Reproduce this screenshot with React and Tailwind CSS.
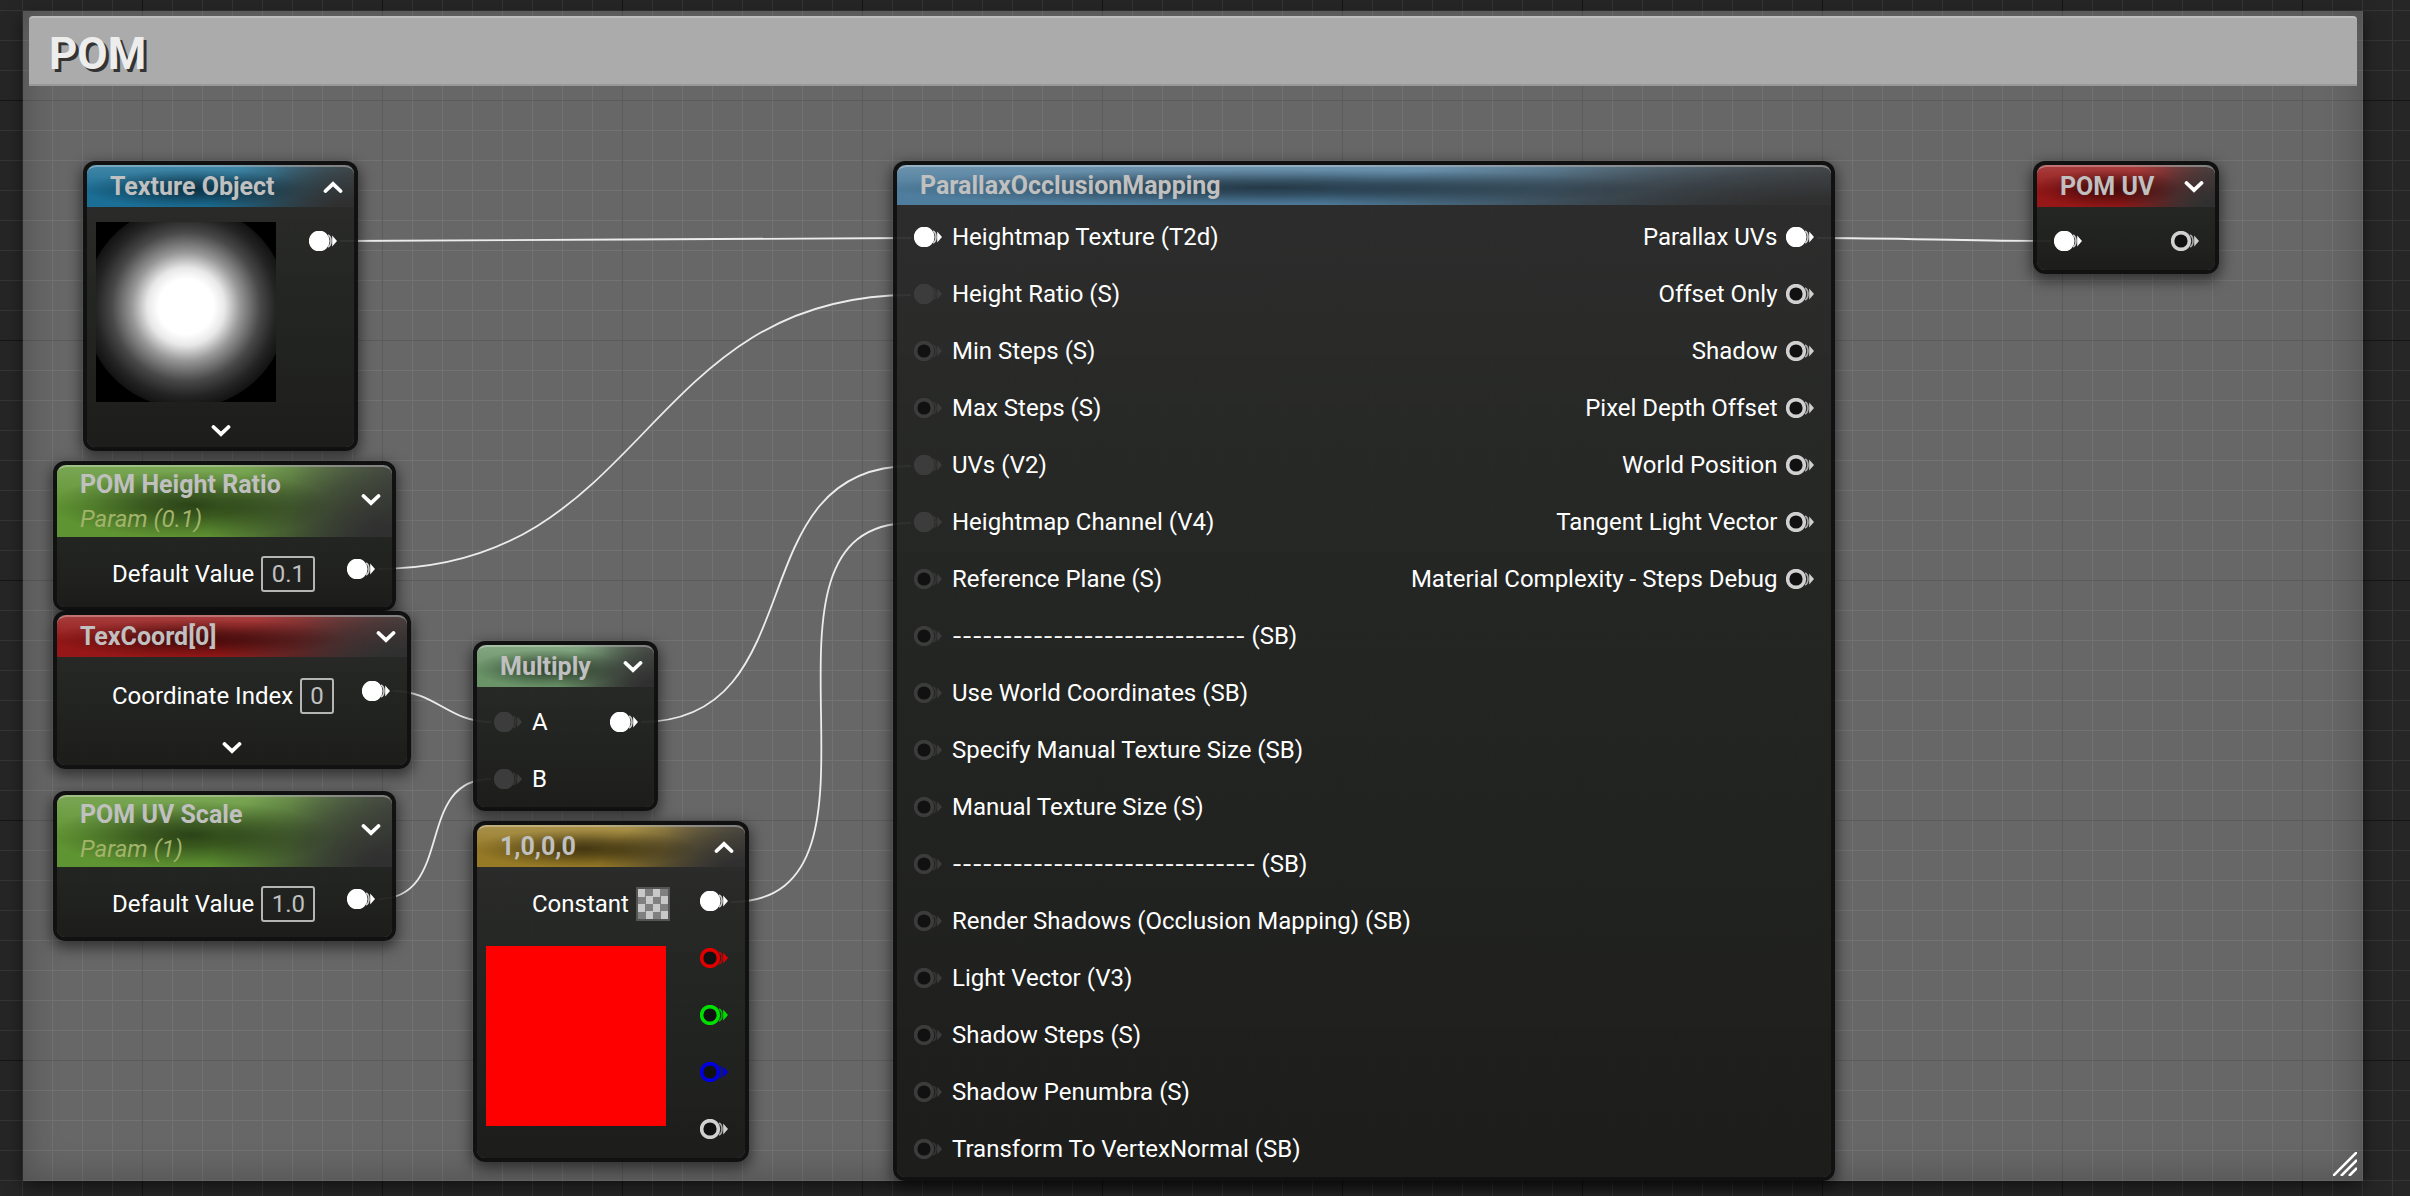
import { useState } from 'react'
import clsx from 'clsx'

const INPUTS = [
  { name: 'Heightmap Texture (T2d)', pin: 'white', filled: true },
  { name: 'Height Ratio (S)', filled: true },
  { name: 'Min Steps (S)' },
  { name: 'Max Steps (S)' },
  { name: 'UVs (V2)', filled: true },
  { name: 'Heightmap Channel (V4)', filled: true },
  { name: 'Reference Plane (S)' },
  { rule: '-----------------------------', name: '(SB)' },
  { name: 'Use World Coordinates (SB)' },
  { name: 'Specify Manual Texture Size (SB)' },
  { name: 'Manual Texture Size (S)' },
  { rule: '------------------------------', name: '(SB)' },
  { name: 'Render Shadows (Occlusion Mapping) (SB)' },
  { name: 'Light Vector (V3)' },
  { name: 'Shadow Steps (S)' },
  { name: 'Shadow Penumbra (S)' },
  { name: 'Transform To VertexNormal (SB)' },
]

const OUTPUTS = [
  'Parallax UVs',
  'Offset Only',
  'Shadow',
  'Pixel Depth Offset',
  'World Position',
  'Tangent Light Vector',
  'Material Complexity - Steps Debug',
]

// [x1, y1, x2, y2]
const WIRES = [
  [340, 241, 911, 238],
  [378, 569, 911, 295],
  [393, 691, 491, 722],
  [378, 899, 491, 779],
  [641, 722, 911, 466],
  [731, 902, 911, 523],
  [1817, 238, 2051, 241],
]

const PIN_COLORS = {
  white: '#ffffff',
  silver: '#d0d0d0',
  dark: '#3c3c3c',
  red: '#e00000',
  green: '#00e000',
  blue: '#0000e0',
}

function wirePath([x1, y1, x2, y2]) {
  const t = (Math.abs(x2 - x1) + Math.abs(y2 - y1)) / 3
  return `M${x1} ${y1} C${x1 + t} ${y1} ${x2 - t} ${y2} ${x2} ${y2}`
}

function Pin({ color = 'dark', filled = false }) {
  const c = PIN_COLORS[color]
  return (
    <svg width="28" height="20" viewBox="0 0 28 20" className="block shrink-0" aria-hidden="true">
      {filled ? (
        <circle cx="10.2" cy="10" r="10.4" fill={c} />
      ) : (
        <circle cx="10" cy="10" r="8.4" fill="#111111" stroke={c} strokeWidth="3.6" />
      )}
      <path d="M19 4 Q22 5.5 22 10 Q22 14.5 19 16" fill="none" stroke={c} strokeWidth="1.6" opacity="0.75" />
      <path d="M23.2 4.4 L28 10 L23.2 15.6 Z" fill={c} />
    </svg>
  )
}

function Chevron({ up = false, label }) {
  return (
    <button type="button" aria-label={label} className="flex h-5 w-6 shrink-0 items-center justify-center">
      <svg width="20" height="12" viewBox="0 0 20 12" aria-hidden="true">
        <path
          d={up ? 'M2.5 10 L10 2.8 L17.5 10' : 'M2.5 2 L10 9.2 L17.5 2'}
          fill="none"
          stroke="#ffffff"
          strokeWidth="3.8"
          strokeLinecap="round"
        />
      </svg>
    </button>
  )
}

function Node({ title, subtitle, color, place, chevron, children }) {
  return (
    <section
      className={clsx(
        'absolute rounded-[12px] border-4 border-[#0d0d0d]/95 bg-linear-to-b from-[#272827]/92 via-[#1f211e]/94 to-[#191a18]/95 bg-clip-padding whitespace-nowrap shadow-[0_5px_14px_2px_rgba(0,0,0,0.5)]',
        place
      )}
    >
      <header
        className={clsx(
          'flex justify-between rounded-t-[9px] border-t-2 border-t-white/40 pr-[9px] pl-[23px]',
          'bg-[radial-gradient(ellipse_42%_48%_at_40%_54%,rgba(0,0,0,0.55),rgba(0,0,0,0.4)_35%,rgba(0,0,0,0.13)_75%,transparent),radial-gradient(ellipse_55%_170%_at_100%_110%,#303030_15%,rgba(48,48,48,0.6)_55%,transparent),linear-gradient(to_right,transparent_70%,rgba(80,80,80,0.8)),linear-gradient(to_bottom,rgba(255,255,255,0.16),transparent_60%)]',
          subtitle && 'h-[72px] items-start',
          !subtitle && 'items-center pb-px',
          !subtitle && (chevron ? 'h-[42px]' : 'h-10'),
          color
        )}
      >
        <div>
          <h2 className="text-[25px] leading-9 font-bold text-[#c0c0c0]">{title}</h2>
          {subtitle && <p className="text-[24px] leading-8 text-[#a2b36a] italic">{subtitle}</p>}
        </div>
        {chevron && (
          <div className={clsx(subtitle && 'pt-[23px]')}>
            <Chevron up={chevron === 'up'} label={`Toggle ${title}`} />
          </div>
        )}
      </header>
      {children}
    </section>
  )
}

function ValueField({ id, label, initial, width }) {
  const [value, setValue] = useState(initial)
  return (
    <div className="flex items-center gap-[7px]">
      <label htmlFor={id}>{label}</label>
      <input
        id={id}
        value={value}
        onChange={e => setValue(e.target.value)}
        className={clsx('h-9 rounded-[3px] border-2 border-[#b5b5b5] bg-transparent text-center text-[#c0c0c0] outline-none', width)}
      />
    </div>
  )
}

function ParamNode({ id, title, subtitle, value, place }) {
  return (
    <Node title={title} subtitle={subtitle} color="bg-[#5f9432]" place={place} chevron="down">
      <div className="flex h-[70px] items-start justify-between pt-[19px] pr-[17px] pl-[55px]">
        <ValueField id={id} label="Default Value" initial={value} width="w-[54px]" />
        <div className="pt-[3px]">
          <Pin color="white" filled />
        </div>
      </div>
    </Node>
  )
}

export default function App() {
  return (
    <main className="relative flex min-h-screen flex-col overflow-hidden bg-[#262626] bg-[linear-gradient(to_right,#161616_1px,transparent_1px),linear-gradient(to_bottom,#161616_1px,transparent_1px),linear-gradient(to_right,#353535_1px,transparent_1px),linear-gradient(to_bottom,#353535_1px,transparent_1px)] bg-[size:240px_240px,240px_240px,30px_30px,30px_30px] bg-[position:142px_100px,142px_100px,22px_10px,22px_10px] pt-[11px] pr-[47px] pb-[15px] pl-[23px] font-['Roboto','Liberation_Sans',sans-serif] text-[24px] leading-7 text-white">
      {/* Comment box */}
      <div className="flex grow flex-col bg-white/30 px-1.5 pt-[5px] shadow-[0_6px_16px_rgba(0,0,0,0.5),inset_0_0_36px_rgba(0,0,0,0.25)]">
        <h1 className="rounded-t-[4px] border-t-2 border-b-2 border-t-[#bdbdbd] border-b-[#989898] bg-[#ababab] pt-[6px] pl-5 text-[44px] leading-[60px] font-bold text-[#ededed] [text-shadow:3px_3px_0_#333333]">
          POM
        </h1>
        <div className="mt-auto flex justify-end pb-[5px]">
          <svg width="24" height="24" viewBox="0 0 24 24" aria-hidden="true">
            <path d="M0 24 L24 0 M8 24 L24 8 M16 24 L24 16" stroke="#ffffff" strokeWidth="2.6" />
          </svg>
        </div>
      </div>

      {/* Wires */}
      <svg className="pointer-events-none absolute inset-0 h-full w-full" aria-hidden="true">
        {WIRES.map(w => (
          <path key={w.join()} d={wirePath(w)} fill="none" stroke="#ececec" strokeWidth="1.8" />
        ))}
      </svg>

      <Node title="Texture Object" color="bg-[#1b6e95]" place="top-[161px] left-[83px] w-[275px]" chevron="up">
        <div className="flex justify-between pt-[15px] pr-[17px] pl-[9px]">
          <div className="size-[180px] bg-[radial-gradient(circle_102px_at_50%_47%,#ffffff_27%,#e8e8e8_38%,#989898_53%,#484848_73%,#242424_88%,#131313_99%,#000000_100%)]" />
          <div className="pt-[9px]">
            <Pin color="white" filled />
          </div>
        </div>
        <div className="flex justify-center pt-[19px] pb-1.5">
          <Chevron label="Expand Texture Object" />
        </div>
      </Node>

      <ParamNode id="height-ratio" title="POM Height Ratio" subtitle="Param (0.1)" value="0.1" place="top-[461px] left-[53px] w-[343px]" />

      <Node title="TexCoord[0]" color="bg-[#951717]" place="top-[611px] left-[53px] w-[358px]" chevron="down">
        <div className="flex items-start justify-between pt-[21px] pr-[17px] pl-[55px]">
          <ValueField id="coord-index" label="Coordinate Index" initial="0" width="w-[34px]" />
          <div className="pt-[3px]">
            <Pin color="white" filled />
          </div>
        </div>
        <div className="flex justify-center pt-6 pb-[7px]">
          <Chevron label="Expand TexCoord" />
        </div>
      </Node>

      <ParamNode id="uv-scale" title="POM UV Scale" subtitle="Param (1)" value="1.0" place="top-[791px] left-[53px] w-[343px]" />

      <Node title="Multiply" color="bg-[#6a9468]" place="top-[641px] left-[473px] w-[185px]" chevron="down">
        <div className="flex justify-between pt-[6px] pr-4 pl-[17px]">
          <ul>
            {['A', 'B'].map(name => (
              <li key={name} className="flex h-[57px] items-center gap-[10px]">
                <Pin filled />
                {name}
              </li>
            ))}
          </ul>
          <div className="flex h-[57px] items-center">
            <Pin color="white" filled />
          </div>
        </div>
      </Node>

      <Node title="1,0,0,0" color="bg-[#967a26]" place="top-[821px] left-[473px] w-[276px]" chevron="up">
        <div className="flex justify-between pt-[5px] pr-[17px] pb-px pl-[9px]">
          <div>
            <div className="flex h-[64px] items-center gap-[7px] pl-[46px]">
              <span id="constant-label">Constant</span>
              <button
                type="button"
                aria-labelledby="constant-label"
                className="size-[34px] border-2 border-[#555555] bg-[conic-gradient(#808080_25%,#c8c8c8_0_50%,#808080_0_75%,#c8c8c8_0)] bg-[size:15px_15px] bg-origin-padding"
              />
            </div>
            <div className="mt-[10px] size-[180px] bg-[#ff0000]" />
          </div>
          <ul>
            {['white', 'red', 'green', 'blue', 'silver'].map(color => (
              <li key={color} className="flex h-[57px] items-center">
                <Pin color={color} filled={color === 'white'} />
              </li>
            ))}
          </ul>
        </div>
      </Node>

      <Node title="ParallaxOcclusionMapping" color="bg-[#4f7d9d]" place="top-[161px] left-[893px] w-[942px]">
        <div className="flex justify-between pt-[3px] pr-[17px] pl-[17px]">
          <ul>
            {INPUTS.map(({ name, rule, pin, filled }, i) => (
              <li key={i} className="flex h-[57px] items-center gap-[10px]">
                <Pin color={pin} filled={filled} />
                <span>
                  {rule && <span className="font-['Inter','Roboto',sans-serif] text-[22px]">{rule}</span>}
                  {rule && ' '}
                  {name}
                </span>
              </li>
            ))}
          </ul>
          <ul>
            {OUTPUTS.map((name, i) => (
              <li key={name} className="flex h-[57px] items-center justify-end gap-[9px]">
                {name}
                <Pin color={i === 0 ? 'white' : 'silver'} filled={i === 0} />
              </li>
            ))}
          </ul>
        </div>
      </Node>

      <Node title="POM UV" color="bg-[#951717]" place="top-[161px] left-[2033px] w-[186px]" chevron="down">
        <div className="flex h-[63px] items-start justify-between pt-6 pr-4 pl-[17px]">
          <Pin color="white" filled />
          <Pin color="silver" />
        </div>
      </Node>
    </main>
  )
}
